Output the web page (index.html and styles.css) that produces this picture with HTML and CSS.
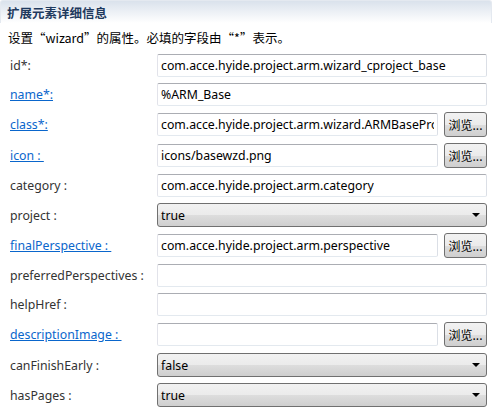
FILE: index.html
```html
<!DOCTYPE html>
<html>
<head>
<meta charset="utf-8">
<link rel="stylesheet" href="styles.css">
</head>
<body>
<div class="panel">
  <div class="header"><span class="title">扩展元素详细信息</span></div>
  <div class="desc">设置“wizard”的属性。必填的字段由“*”表示。</div>
  <div class="form">
    <div class="row">
      <span class="label">id*:</span>
      <div class="ctl"><div class="text"><span class="val">com.acce.hyide.project.arm.wizard_cproject_base</span></div></div>
    </div>
    <div class="row">
      <a class="label link">name*:</a>
      <div class="ctl"><div class="text"><span class="val">%ARM_Base</span></div></div>
    </div>
    <div class="row">
      <a class="label link">class*:</a>
      <div class="ctl"><div class="text narrow"><span class="val">com.acce.hyide.project.arm.wizard.ARMBasePro</span></div><button class="btn">浏览...</button></div>
    </div>
    <div class="row">
      <a class="label link">icon : </a>
      <div class="ctl"><div class="text narrow"><span class="val">icons/basewzd.png</span></div><button class="btn">浏览...</button></div>
    </div>
    <div class="row">
      <span class="label">category :</span>
      <div class="ctl"><div class="text"><span class="val">com.acce.hyide.project.arm.category</span></div></div>
    </div>
    <div class="row">
      <span class="label">project :</span>
      <div class="ctl"><div class="select"><span>true</span><span class="arrow"></span></div></div>
    </div>
    <div class="row">
      <a class="label link">finalPerspective : </a>
      <div class="ctl"><div class="text narrow"><span class="val">com.acce.hyide.project.arm.perspective</span></div><button class="btn">浏览...</button></div>
    </div>
    <div class="row">
      <span class="label">preferredPerspectives :</span>
      <div class="ctl"><div class="text"></div></div>
    </div>
    <div class="row">
      <span class="label">helpHref :</span>
      <div class="ctl"><div class="text"></div></div>
    </div>
    <div class="row">
      <a class="label link">descriptionImage : </a>
      <div class="ctl"><div class="text narrow"></div><button class="btn">浏览...</button></div>
    </div>
    <div class="row">
      <span class="label">canFinishEarly :</span>
      <div class="ctl"><div class="select"><span>false</span><span class="arrow"></span></div></div>
    </div>
    <div class="row">
      <span class="label">hasPages :</span>
      <div class="ctl"><div class="select"><span>true</span><span class="arrow"></span></div></div>
    </div>
  </div>
</div>
</body>
</html>
```
FILE: styles.css
```css
html, body {
  margin: 0;
  padding: 0;
  background: #ffffff;
}
body {
  font-family: "Noto Sans", "Noto Sans CJK SC", sans-serif;
  font-size: 12.3px;
  color: #1a1a1a;
  width: 494px;
  height: 414px;
  overflow: hidden;
}
.panel {
  display: flex;
  flex-direction: column;
}
.header {
  height: 22px;
  margin: 0 2px 0 0;
  border: 1px solid #e4e9f0;
  border-bottom: none;
  border-radius: 3px 3px 0 0;
  background: linear-gradient(#dae2ec, #ffffff);
  display: flex;
  align-items: center;
  padding-left: 6px;
}
.title {
  font-family: "Noto Sans CJK SC", sans-serif;
  font-weight: bold;
  font-size: 12.5px;
  color: #1f3a5e;
}
.desc {
  font-family: "Noto Sans CJK SC", sans-serif;
  font-size: 12.5px;
  height: 28px;
  display: flex;
  align-items: center;
  padding-left: 8px;
  color: #000;
}
.form {
  display: flex;
  flex-direction: column;
  gap: 6px;
  padding-top: 3px;
}
.row {
  display: flex;
  align-items: center;
  min-height: 23px;
}
.label {
  padding-left: 10px;
  color: #333;
  white-space: pre;
  flex: none;
}
.link {
  color: #0a66cc;
  text-decoration: underline;
}
.ctl {
  width: 330px;
  margin-left: auto;
  margin-right: 7px;
  display: flex;
  align-items: center;
  gap: 6px;
}
.text {
  flex: 1;
  min-width: 0;
  height: 21px;
  box-sizing: content-box;
  border: 1px solid;
  border-color: #abadb3 #dbdfe6 #e3e9ef #e2e3ea;
  border-radius: 2px;
  padding: 0 3px;
  display: flex;
  align-items: center;
  white-space: nowrap;
  overflow: hidden;
  color: #000;
}
.val {
  overflow: hidden;
  white-space: nowrap;
}
.btn {
  width: 43px;
  height: 25px;
  flex: none;
  font-family: "Noto Sans CJK SC", sans-serif;
  font-size: 12px;
  padding: 0;
  border: 1px solid #707070;
  border-radius: 3px;
  background: linear-gradient(#f2f2f2 0%, #ebebeb 50%, #dddddd 51%, #cfcfcf 100%);
  color: #000;
}
.select {
  flex: 1;
  height: 22px;
  border: 1px solid #707070;
  border-radius: 3px;
  background: linear-gradient(#f2f2f2 0%, #ebebeb 50%, #dddddd 51%, #cfcfcf 100%);
  display: flex;
  align-items: center;
  justify-content: space-between;
  padding: 0 6px 0 3px;
  color: #000;
}
.arrow {
  width: 0;
  height: 0;
  border-left: 4px solid transparent;
  border-right: 4px solid transparent;
  border-top: 4px solid #000;
}
```
